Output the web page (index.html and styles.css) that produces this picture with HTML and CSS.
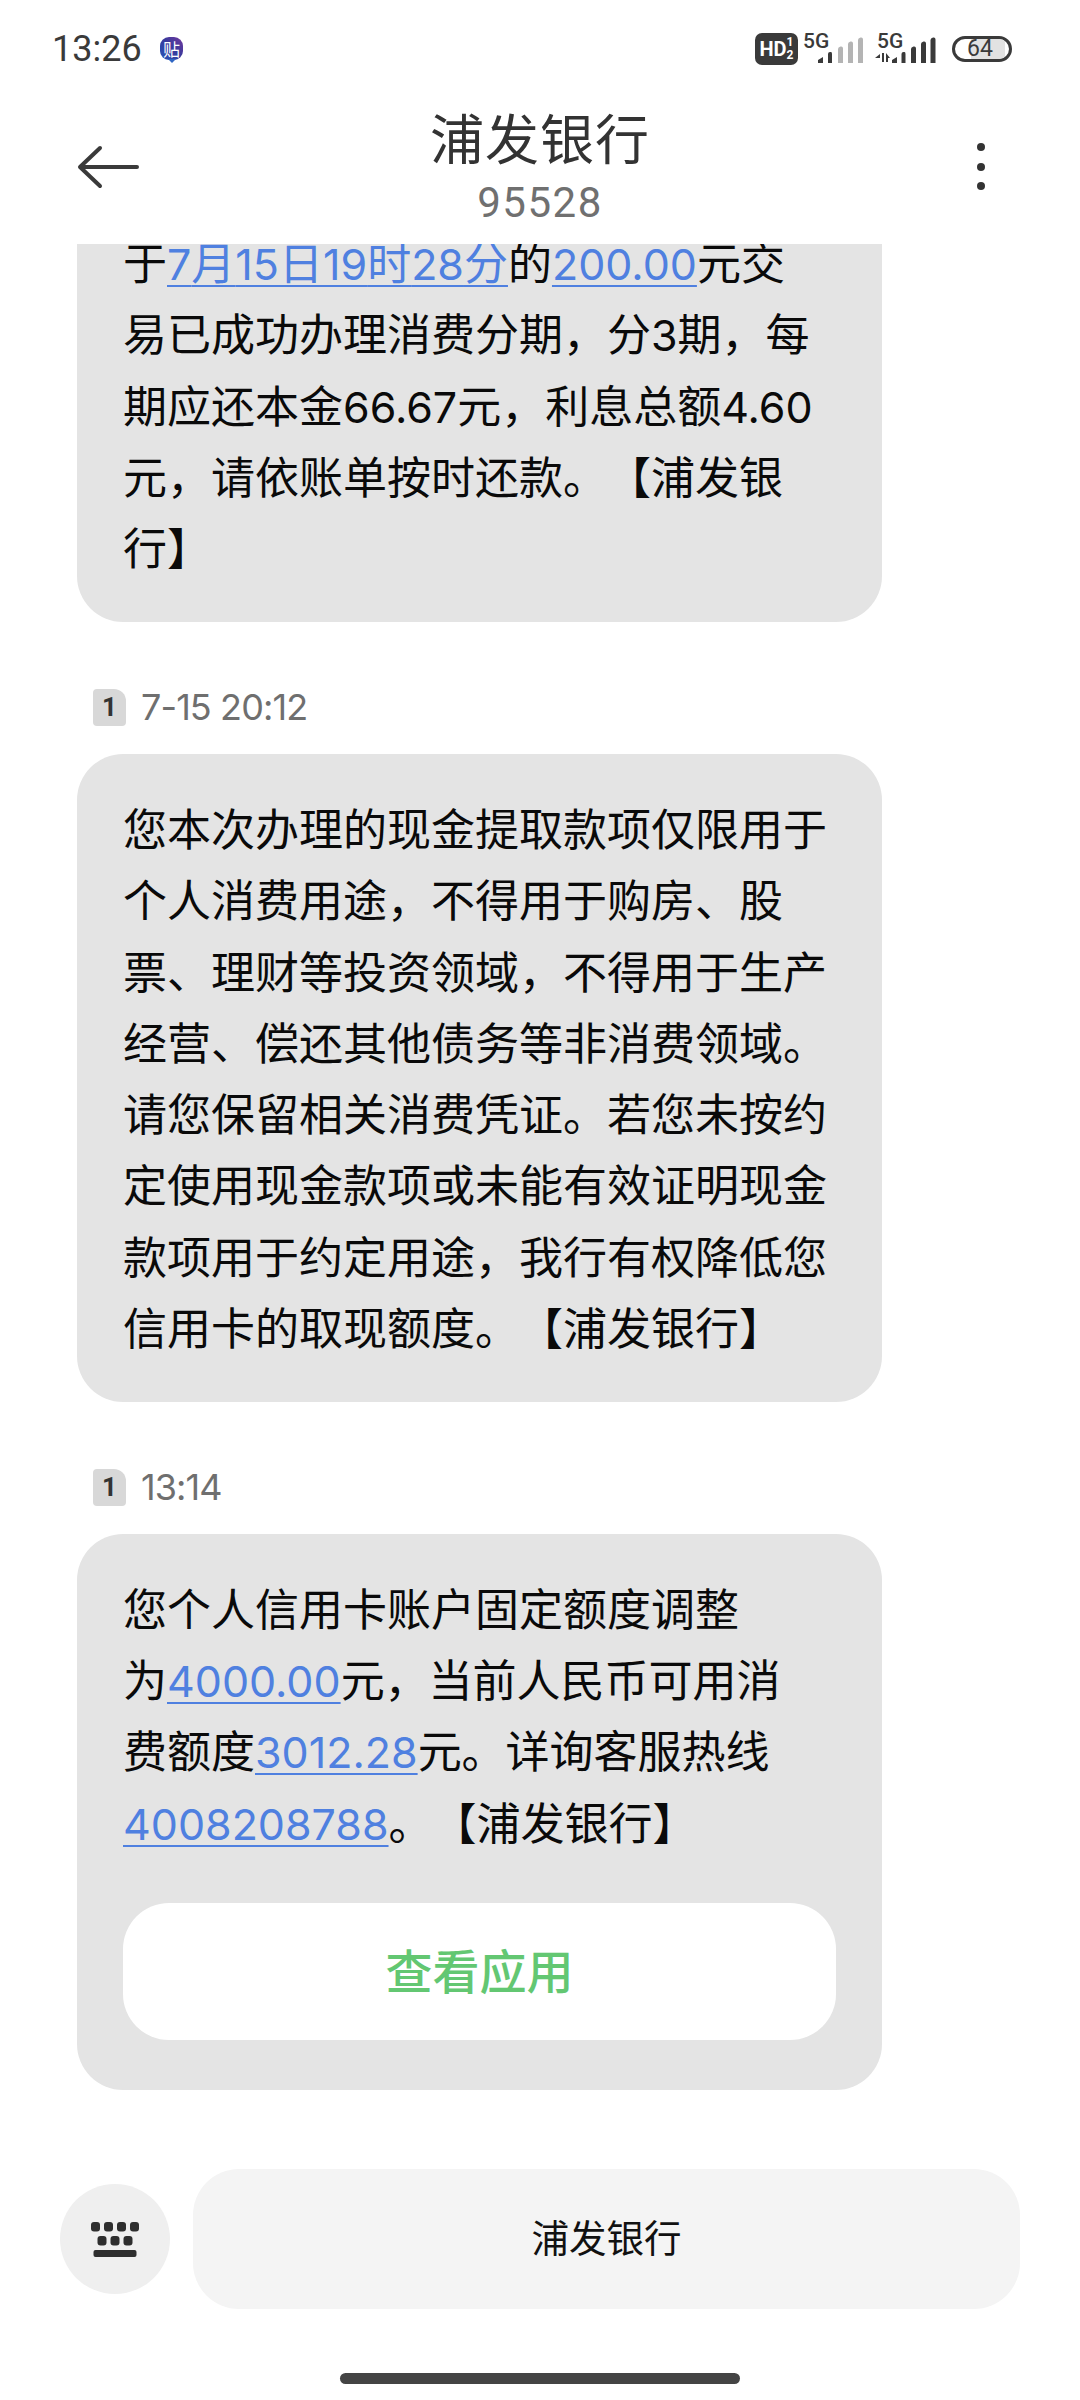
FILE: index.html
```html
<!DOCTYPE html>
<html lang="zh-CN">
<head>
    <meta charset="UTF-8">
    <meta name="viewport" content="width=device-width, initial-scale=1.0">
    <title>浦发银行</title>
    <link rel="stylesheet" href="styles.css">
</head>
<body>
<div class="phone">

    <div class="status-bar">
        <span class="clock">13:26</span>
        <span class="tieba">贴</span>
        <div class="status-right">
            <span class="hd">HD<span class="hd-frac">1<br>2</span></span>
            <div class="sim">
                <span class="net">5G</span>
                <svg width="46" height="28" viewBox="0 0 46 28">
                    <path d="M1 27v-3l5-3v6zM11 27v-9q0-2 2-2h1q1 0 1 2v9z" fill="#3a3a3a"/>
                    <path d="M21 27v-14q0-2 2.500-2.500t2.500 2v14.500zM31 27v-19q0-2 2.500-2.500t2.500 2v19.500zM41 27v-23q0-2 2.500-2.500t2.500 2v23.500z" fill="#b4b4b4"/>
                </svg>
            </div>
            <div class="sim sim-two">
                <span class="net">5G</span>
                <svg width="61" height="28" viewBox="0 0 61 28">
                    <path d="M0 22l5-4v4zM7 17h2v9H7zM11 17l4 5h-2v4h-2z" fill="#3a3a3a"/>
                    <path d="M17 27v-3l5-3v6zM26.500 27v-9q0-2 2-2h1q1 0 1 2v9zM36 27v-14q0-2 2.500-2.500t2.500 2v14.500zM46 27v-19q0-2 2.500-2.500t2.500 2v19.500zM55.500 27v-23q0-2 2.500-2.500t2.500 2v23.500z" fill="#3a3a3a"/>
                </svg>
            </div>
            <div class="battery">
                <div class="battery-fill"></div>
                <span class="battery-num">64</span>
            </div>
        </div>
    </div>

    <header class="top-bar">
        <svg class="back" width="62" height="44" viewBox="0 0 62 44">
            <path d="M60 22H4M23 3L3 22l20 19" fill="none" stroke="#3a3a3a" stroke-width="4" stroke-linecap="round" stroke-linejoin="round"/>
        </svg>
        <div class="contact">
            <div class="contact-name">浦发银行</div>
            <div class="contact-num">95528</div>
        </div>
        <div class="more">
            <span class="dot"></span>
            <span class="dot"></span>
            <span class="dot"></span>
        </div>
    </header>

    <main class="thread">
        <div class="bubble bubble-cut">
            于<a class="num link">7</a><a class="link">月</a><a class="num link">15</a><a class="link">日</a><a class="num link">19</a><a class="link">时</a><a class="num link">28</a><a class="link">分</a>的<a class="num link">200.00</a>元交<br>
            易已成功办理消费分期，分<span class="num">3</span>期，每<br>
            期应还本金<span class="num">66.67</span>元，利息总额<span class="num">4.60</span><br>
            元，请依账单按时还款。【浦发银<br>
            行】
        </div>

        <div class="meta"><span class="sim-tag">1</span><span class="time">7-15 20:12</span></div>
        <div class="bubble">
            您本次办理的现金提取款项仅限用于<br>
            个人消费用途，不得用于购房、股<br>
            票、理财等投资领域，不得用于生产<br>
            经营、偿还其他债务等非消费领域。<br>
            请您保留相关消费凭证。若您未按约<br>
            定使用现金款项或未能有效证明现金<br>
            款项用于约定用途，我行有权降低您<br>
            信用卡的取现额度。【浦发银行】
        </div>

        <div class="meta"><span class="sim-tag">1</span><span class="time">13:14</span></div>
        <div class="bubble bubble-app">
            您个人信用卡账户固定额度调整<br>
            为<a class="num link">4000.00</a>元，当前人民币可用消<br>
            费额度<a class="num link">3012.28</a>元。详询客服热线<br>
            <a class="num link">4008208788</a>。【浦发银行】
            <div class="app-btn">查看应用</div>
        </div>
    </main>

    <footer class="bottom-bar">
        <div class="kb-btn">
            <svg width="48" height="35" viewBox="0 0 48 35" fill="#2e2e2e">
                <rect x="0" y="0" width="9" height="9.500" rx="3"/>
                <rect x="13" y="0" width="9" height="9.500" rx="3"/>
                <rect x="26" y="0" width="9" height="9.500" rx="3"/>
                <rect x="39" y="0" width="9" height="9.500" rx="3"/>
                <rect x="6.500" y="14" width="9" height="9.500" rx="3"/>
                <rect x="19.500" y="14" width="9" height="9.500" rx="3"/>
                <rect x="32.500" y="14" width="9" height="9.500" rx="3"/>
                <rect x="2.500" y="28" width="43" height="7" rx="2"/>
            </svg>
        </div>
        <div class="quick-reply">浦发银行</div>
    </footer>

    <div class="home-bar"></div>
</div>
</body>
</html>
```

FILE: styles.css
```css
* {
    box-sizing: border-box;
}

html, body {
    margin: 0;
    padding: 0;
    background: #fff;
}

body {
    font-family: "Noto Sans CJK SC", "Noto Sans", sans-serif;
    text-spacing-trim: space-all;
}

.phone {
    width: 1080px;
    height: 2400px;
    display: flex;
    flex-direction: column;
    overflow: hidden;
}

/* status bar */
.status-bar {
    height: 98px;
    padding: 0 68px 0 52px;
    display: flex;
    align-items: center;
    color: #3a3a3a;
}

.clock {
    font-family: Roboto, sans-serif;
    font-size: 36px;
    width: 108px;
}

.tieba {
    position: relative;
    width: 23px;
    height: 23px;
    margin-top: -2px;
    border-radius: 9px;
    background: linear-gradient(45deg, #2456b8, #3a3a9c 55%, #74389e);
    color: #fff;
    font-size: 17px;
    line-height: 23px;
    text-align: center;
}

.tieba::after {
    content: "";
    position: absolute;
    left: 8px;
    top: 22px;
    border-left: 4px solid transparent;
    border-right: 4px solid transparent;
    border-top: 4px solid #2f66c4;
}

.status-right {
    margin-left: auto;
    display: flex;
    align-items: center;
}

.hd {
    width: 43px;
    height: 32px;
    background: #3a3a3a;
    color: #fff;
    border-radius: 7px;
    font-family: Roboto, sans-serif;
    font-weight: 700;
    font-size: 20px;
    line-height: 32px;
    display: flex;
    justify-content: center;
}

.hd-frac {
    font-size: 12px;
    line-height: 13px;
    padding-top: 3px;
}

.sim {
    width: 60px;
    height: 30px;
    margin-left: 5px;
    position: relative;
    display: flex;
    justify-content: flex-end;
    align-items: flex-end;
}

.sim-two {
    width: 61px;
    margin-left: 12px;
}

.sim-two .net {
    left: 2px;
}

.net {
    position: absolute;
    left: 0;
    top: -3px;
    font-family: Roboto, sans-serif;
    font-weight: 500;
    font-size: 21px;
    line-height: 20px;
    color: #3a3a3a;
}

.battery {
    position: relative;
    width: 60px;
    height: 26px;
    margin-left: 16px;
    border: 3px solid #3a3a3a;
    border-radius: 13px;
    overflow: hidden;
}

.battery-fill {
    width: 62%;
    height: 100%;
    margin-left: 30%;
    background: #e2e2e2;
}

.battery-num {
    position: absolute;
    inset: 0 4px 0 0;
    font-family: Roboto, sans-serif;
    font-size: 23px;
    line-height: 20px;
    text-align: center;
    color: #3a3a3a;
}

/* top bar */
.top-bar {
    height: 146px;
    position: relative;
    display: flex;
    align-items: flex-start;
    justify-content: center;
}

.back {
    position: absolute;
    left: 77px;
    top: 47px;
}

.contact {
    text-align: center;
}

.contact-name {
    font-size: 54px;
    line-height: 80px;
    margin-top: -1px;
    color: #333;
    letter-spacing: 1px;
}

.contact-num {
    font-family: Roboto, sans-serif;
    font-size: 42px;
    line-height: 52px;
    color: #707070;
    letter-spacing: 1.500px;
}

.more {
    position: absolute;
    left: 977px;
    top: 45px;
    display: flex;
    flex-direction: column;
    gap: 11.500px;
}

.dot {
    width: 8px;
    height: 8px;
    border-radius: 50%;
    background: #333;
}

/* messages */
.thread {
    flex: 1;
    padding: 0 198px 0 77px;
    overflow: hidden;
}

.bubble {
    background: #e4e4e4;
    border-radius: 46px;
    padding: 38px 46px 39.500px;
    font-size: 44px;
    line-height: 71.300px;
    color: #0a0a0a;
    white-space: nowrap;
}

.bubble-cut {
    border-radius: 0 0 46px 46px;
    margin-top: -18px;
    padding-top: 0;
}

.bubble-app {
    padding-bottom: 50px;
}

.num {
    font-family: Inter, sans-serif;
    font-size: 43px;
    line-height: 1;
}

.link {
    color: #4f80e0;
    text-decoration: underline;
    text-decoration-thickness: 2px;
    text-underline-offset: 5px;
}

.meta {
    height: 37px;
    margin: 67px 0 28px;
    padding-left: 16px;
    display: flex;
    align-items: center;
    gap: 15px;
}

.sim-tag {
    width: 33px;
    height: 37px;
    background: #d8d8d8;
    border-radius: 4px 12px 4px 4px;
    font-family: Roboto, sans-serif;
    font-weight: 700;
    font-size: 26px;
    line-height: 37px;
    text-align: center;
    color: #333;
}

.time {
    font-family: Inter, sans-serif;
    font-size: 36px;
    letter-spacing: -0.900px;
    color: #6f6f6f;
}

.app-btn {
    margin: 46px 0 0;
    height: 137px;
    background: #fff;
    border-radius: 46px;
    font-size: 47px;
    font-weight: 500;
    line-height: 131px;
    text-align: center;
    color: #63c772;
}

/* bottom */
.bottom-bar {
    height: 140px;
    margin-bottom: 64px;
    padding: 0 60px;
    display: flex;
    align-items: center;
    gap: 23px;
    flex-shrink: 0;
}

.kb-btn {
    width: 110px;
    height: 110px;
    border-radius: 50%;
    background: #efefef;
    display: flex;
    align-items: center;
    justify-content: center;
    flex-shrink: 0;
}

.quick-reply {
    flex: 1;
    height: 140px;
    background: #f4f4f4;
    border-radius: 46px;
    font-size: 37.500px;
    line-height: 134px;
    text-align: center;
    color: #111;
}

.home-bar {
    width: 400px;
    height: 11px;
    border-radius: 5.500px;
    background: #444;
    margin: 0 auto 16px;
    flex-shrink: 0;
}
```
